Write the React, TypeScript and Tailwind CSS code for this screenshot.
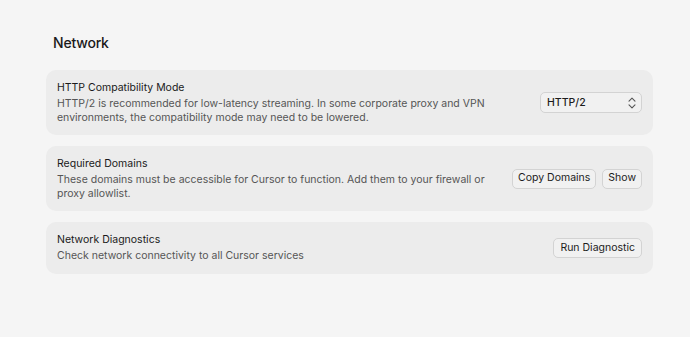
import React from 'react';

function UpDown() {
  return (
    <svg width="8" height="12" viewBox="0 0 8 12" fill="none" stroke="#555" strokeWidth="1.1" strokeLinecap="round" strokeLinejoin="round">
      <path d="M1 4.2L4 1.2L7 4.2" />
      <path d="M1 7.8L4 10.8L7 7.8" />
    </svg>
  );
}

function Btn({ children, tight }: { children: React.ReactNode; tight?: boolean }) {
  return (
    <button
      className={
        'h-[20px] rounded-[5px] border border-[#d3d3d3] bg-[#f1f1f1] text-[10.5px] leading-none text-[#1c1c1c] ' +
        (tight ? 'px-[5px]' : 'px-[6px]')
      }
    >
      {children}
    </button>
  );
}

export default function App() {
  const rows = [
    {
      title: 'HTTP Compatibility Mode',
      desc: 'HTTP/2 is recommended for low-latency streaming. In some corporate proxy and VPN environments, the compatibility mode may need to be lowered.',
      action: (
        <div className="w-[102px] h-[21px] rounded-[5px] border border-[#d3d3d3] bg-[#f1f1f1] flex items-center justify-between pl-[6px] pr-[5px]">
          <span className="text-[10.5px] font-medium text-[#1c1c1c]">HTTP/2</span>
          <UpDown />
        </div>
      ),
    },
    {
      title: 'Required Domains',
      desc: 'These domains must be accessible for Cursor to function. Add them to your firewall or proxy allowlist.',
      action: (
        <div className="flex gap-[6px]">
          <Btn tight>Copy Domains</Btn>
          <Btn tight>Show</Btn>
        </div>
      ),
    },
    {
      title: 'Network Diagnostics',
      desc: 'Check network connectivity to all Cursor services',
      action: <Btn>Run Diagnostic</Btn>,
    },
  ];

  return (
    <div className="min-h-screen w-full bg-[#f5f5f5] pt-[33px] font-['Inter',sans-serif]">
      <div className="ml-[46px] w-[607px]">
        <h2 className="pl-[7px] text-[14px] leading-[20px] tracking-[-0.2px] font-medium text-[#1a1a1a]">Network</h2>
        <div className="mt-[17px] flex flex-col gap-[11px]">
          {rows.map((r) => (
            <div key={r.title} className="flex items-center gap-3 rounded-[10px] bg-[#ececec] pl-[11px] pr-[11px] py-[11px]">
              <div className="flex-1 min-w-0">
                <div className="text-[10.5px] leading-[14px] text-[#1a1a1a]">{r.title}</div>
                <div className="mt-[2px] text-[10.5px] leading-[13.5px] text-[#555555]">{r.desc}</div>
              </div>
              {r.action}
            </div>
          ))}
        </div>
      </div>
    </div>
  );
}
